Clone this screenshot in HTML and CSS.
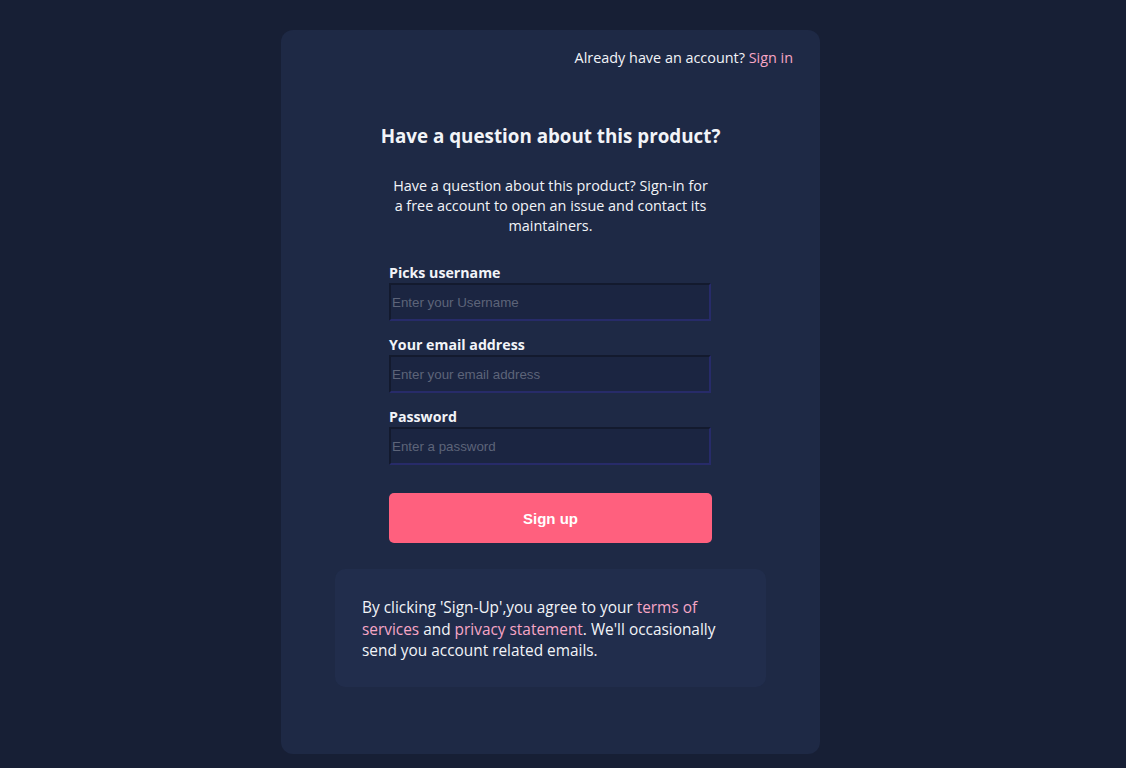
FILE: index.html
```html
<!DOCTYPE html>
<html lang="en">
<head>
<meta charset="utf-8">
<title>Sign up</title>
<link rel="stylesheet" href="styles.css">
</head>
<body>
<main class="card">
  <div class="top-link">Already have an account? <a href="#" class="pink">Sign in</a></div>
  <h1 class="title">Have a question about this product?</h1>
  <p class="intro">Have a question about this product? Sign-in for a free account to open an issue and contact its maintainers.</p>
  <form class="form">
    <label class="field">
      <span class="label">Picks username</span>
      <input class="input" type="text" placeholder="Enter your Username">
    </label>
    <label class="field">
      <span class="label">Your email address</span>
      <input class="input" type="email" placeholder="Enter your email address">
    </label>
    <label class="field">
      <span class="label">Password</span>
      <input class="input" type="password" placeholder="Enter a password">
    </label>
    <button class="btn" type="button">Sign up</button>
  </form>
  <div class="terms">By clicking 'Sign-Up',you agree to your <a href="#" class="pink">terms of services</a> and <a href="#" class="pink">privacy statement</a>. We'll occasionally send you account related emails.</div>
</main>
</body>
</html>
```
FILE: styles.css
```css
* { box-sizing: border-box; }
html, body { margin: 0; padding: 0; }
body {
  background: #171f35;
  font-family: "Open Sans", "Noto Sans", sans-serif;
  color: #f2f4f8;
  min-height: 768px;
  padding-top: 30px;
}
.card {
  width: 539px;
  height: 724px;
  margin-left: 281px;
  background: #1e2945;
  border-radius: 12px;
  padding: 18px 27px 0 27px;
  display: flex;
  flex-direction: column;
  align-items: center;
}
.top-link {
  align-self: flex-end;
  font-size: 14.4px;
  line-height: 20px;
}
.pink { color: #f7a6c6; text-decoration: none; }
.title {
  margin: 56px 0 0 0;
  font-size: 18.8px;
  line-height: 24px;
  font-weight: 700;
}
.intro {
  margin: 28px 0 0 0;
  width: 322px;
  text-align: center;
  font-size: 14.4px;
  line-height: 20px;
}
.form {
  margin-top: 27px;
  width: 323px;
  display: flex;
  flex-direction: column;
}
.field {
  display: flex;
  flex-direction: column;
  margin-bottom: 14px;
}
.label {
  font-size: 14.2px;
  font-weight: 700;
  line-height: 20px;
}
.input {
  height: 38px;
  width: 322px;
  background: #1b2541;
  border-style: solid;
  border-width: 2px;
  border-top-color: #131a2e;
  border-left-color: #131a2e;
  border-bottom-color: #272b69;
  border-right-color: #272b69;
  color: #d0d4de;
  font-family: "Liberation Sans", Arial, sans-serif;
  font-size: 13.33px;
  padding: 0 1px;
  outline: none;
}
.input::placeholder { color: #5d6479; }
.btn {
  margin-top: 14px;
  height: 50px;
  width: 323px;
  border: none;
  border-radius: 5px;
  background: #ff607e;
  color: #fff;
  font-family: "Liberation Sans", Arial, sans-serif;
  font-weight: 700;
  font-size: 15px;
}
.terms {
  margin-top: 26px;
  width: 431px;
  background: #212d4c;
  border-radius: 10px;
  padding: 28px 50px 25px 27px;
  font-size: 15.4px;
  line-height: 21.5px;
}
```
